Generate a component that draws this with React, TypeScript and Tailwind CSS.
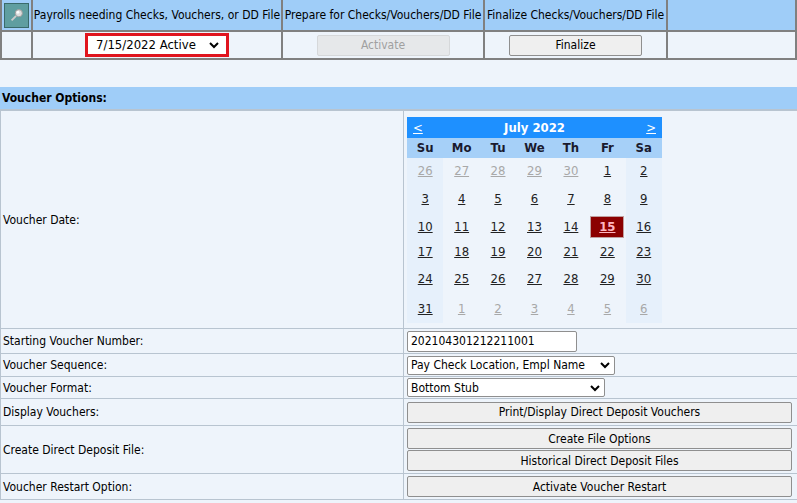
import React from 'react'

const weeks: [number, boolean][][] = [
  [[26, true], [27, true], [28, true], [29, true], [30, true], [1, false], [2, false]],
  [[3, false], [4, false], [5, false], [6, false], [7, false], [8, false], [9, false]],
  [[10, false], [11, false], [12, false], [13, false], [14, false], [15, false], [16, false]],
  [[17, false], [18, false], [19, false], [20, false], [21, false], [22, false], [23, false]],
  [[24, false], [25, false], [26, false], [27, false], [28, false], [29, false], [30, false]],
  [[31, false], [1, true], [2, true], [3, true], [4, true], [5, true], [6, true]],
]
const rowH = ['h-[26px]', 'h-[29px]', 'h-[28px]', 'h-[22px]', 'h-[32px]', 'h-[28px]']

const Chevron = () => (
  <svg className="w-3 h-3" viewBox="0 0 12 12" fill="none" stroke="black" strokeWidth={2}>
    <path d="M2 4l4 4 4-4" />
  </svg>
)

function Row({ label, children, h }: { label: string; children: React.ReactNode; h: string }) {
  return (
    <div className={`flex border-b border-[#b8c4d0] ${h}`}>
      <div className="w-[403px] border-r border-[#b8c4d0] flex items-center pl-[2px]">{label}</div>
      <div className="flex-1 flex flex-col justify-center pl-[3px] pr-[5px] gap-[1px]">{children}</div>
    </div>
  )
}

const Btn = ({ children }: { children: React.ReactNode }) => (
  <div className="h-[21px] w-full bg-[#efefef] border border-[#8f8f8f] rounded-[2px] flex items-center justify-center">{children}</div>
)

export default function App() {
  return (
    <div className="w-[797px] h-[503px] bg-[#eef4fb] text-[12px] text-black overflow-hidden" style={{ fontFamily: '"DejaVu Sans Condensed", "Liberation Sans", sans-serif' }}>
      <div className="border-2 border-[#808080] border-t-0">
        <div className="flex h-[30px] bg-[#9fcdf8]">
          <div className="w-[31px] border-r-2 border-[#808080] flex items-center justify-center">
            <div className="w-[25px] h-[25px] bg-[#5f9ea0] border border-[#3a6a6a] flex items-center justify-center">
              <svg viewBox="0 0 20 20" className="w-[18px] h-[18px]">
                <path d="M4 16l5-5" stroke="#ccc" strokeWidth={2} />
                <circle cx="12" cy="8" r="4" fill="#ddd" stroke="#999" />
                <circle cx="11" cy="7" r="1.5" fill="#fff" />
              </svg>
            </div>
          </div>
          <div className="w-[250px] border-r-2 border-[#808080] flex items-center justify-center">Payrolls needing Checks, Vouchers, or DD File</div>
          <div className="w-[202px] border-r-2 border-[#808080] flex items-center justify-center">Prepare for Checks/Vouchers/DD File</div>
          <div className="w-[183px] border-r-2 border-[#808080] flex items-center justify-center">Finalize Checks/Vouchers/DD File</div>
          <div className="flex-1" />
        </div>
        <div className="flex h-[28px] border-t-2 border-[#808080]">
          <div className="w-[31px] border-r-2 border-[#808080]" />
          <div className="w-[250px] border-r-2 border-[#808080] flex items-center justify-center">
            <div className="border-[3px] border-[#e0141e] bg-white w-[144px] h-[24px] flex items-center justify-between pl-[8px] pr-[6px] text-[13px]">
              7/15/2022 Active <Chevron />
            </div>
          </div>
          <div className="w-[202px] border-r-2 border-[#808080] flex items-center justify-center">
            <div className="w-[133px] h-[21px] bg-[#e6e8ea] border border-[#d6d8da] rounded-[2px] flex items-center justify-center text-[#a0a0a0]">Activate</div>
          </div>
          <div className="w-[183px] border-r-2 border-[#808080] flex items-center justify-center">
            <div className="w-[133px] h-[21px] bg-[#efefef] border border-[#8f8f8f] rounded-[2px] flex items-center justify-center">Finalize</div>
          </div>
          <div className="flex-1" />
        </div>
      </div>
      <div className="h-[27px]" />
      <div className="h-[24px] bg-[#9fcdf8] font-bold flex items-center pl-[2px] border-b-2 border-[#b8c4d0]">Voucher Options:</div>
      <div className="border-l border-[#b8c4d0]">
        <Row label="Voucher Date:" h="h-[218px]">
          <div className="w-[255px] self-start mt-[1px]">
            <div className="h-[21px] bg-[#1e90ff] text-white font-bold flex items-center justify-between px-[6px] text-[13px]">
              <span className="underline font-normal">&lt;</span>
              <span>July 2022</span>
              <span className="underline font-normal">&gt;</span>
            </div>
            <div className="grid grid-cols-7 h-[20px] bg-[#a6d0f8] font-bold text-[#1a1a2e] text-[13px]">
              {['Su', 'Mo', 'Tu', 'We', 'Th', 'Fr', 'Sa'].map(d => <div key={d} className="flex items-center justify-center">{d}</div>)}
            </div>
            {weeks.map((w, i) => (
              <div key={i} className={`grid grid-cols-7 ${rowH[i]}`}>
                {w.map(([n, other], j) => {
                  const sel = i === 2 && j === 5
                  return (
                    <div key={j} className={`flex items-center justify-center text-[13px] ${j === 0 || j === 6 ? 'bg-[#e6f0fb]' : ''}`}>
                      {sel ? (
                        <span className="w-[34px] h-[22px] bg-[#8b0000] text-[#ffb6c1] font-bold underline flex items-center justify-center border border-[#c0a0a0]">{n}</span>
                      ) : (
                        <span className={`underline ${other ? 'text-[#a8a8a8]' : 'text-[#222]'}`}>{n}</span>
                      )}
                    </div>
                  )
                })}
              </div>
            ))}
          </div>
        </Row>
        <Row label="Starting Voucher Number:" h="h-[25px]">
          <div className="w-[170px] h-[21px] bg-white border border-[#8f8f8f] rounded-[2px] flex items-center pl-[3px]">202104301212211001</div>
        </Row>
        <Row label="Voucher Sequence:" h="h-[23px]">
          <div className="w-[208px] h-[19px] bg-white border border-[#8f8f8f] rounded-[2px] flex items-center justify-between px-[3px]">Pay Check Location, Empl Name <Chevron /></div>
        </Row>
        <Row label="Voucher Format:" h="h-[22px]">
          <div className="w-[198px] h-[19px] bg-white border border-[#8f8f8f] rounded-[2px] flex items-center justify-between px-[3px]">Bottom Stub <Chevron /></div>
        </Row>
        <Row label="Display Vouchers:" h="h-[27px]">
          <Btn>Print/Display Direct Deposit Vouchers</Btn>
        </Row>
        <Row label="Create Direct Deposit File:" h="h-[48px]">
          <Btn>Create File Options</Btn>
          <Btn>Historical Direct Deposit Files</Btn>
        </Row>
        <Row label="Voucher Restart Option:" h="h-[26px]">
          <Btn>Activate Voucher Restart</Btn>
        </Row>
      </div>
    </div>
  )
}
